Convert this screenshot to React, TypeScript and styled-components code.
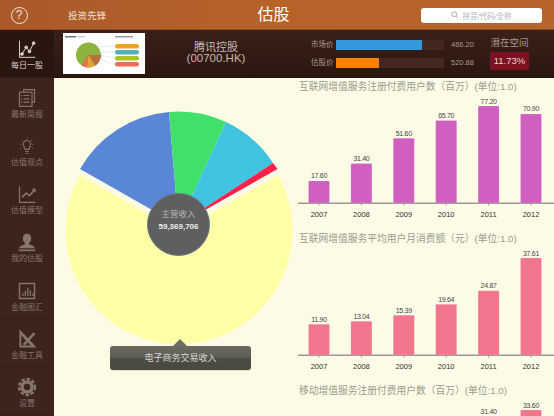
import React from "react";
import styled, { createGlobalStyle } from "styled-components";

const Global = createGlobalStyle`
  html, body { margin: 0; padding: 0; background: #fdfbe6; }
  body { font-family: "Liberation Sans", "Noto Sans CJK SC", sans-serif; }
`;
const CJK = `"Liberation Sans", "Noto Sans CJK SC", sans-serif`;

const Page = styled.div`
  width: 554px; height: 416px; overflow: hidden; display: flex; flex-direction: column;
`;
const TopBar = styled.header`
  height: 30px; flex: none; display: grid; grid-template-columns: 68px 1fr 133px; align-items: center; position: relative;
  background: linear-gradient(90deg, #a9592a 0%, #b6632a 45%, #b8652b 100%);
  box-shadow: inset 0 -1px 0 #8f4c24;
`;
const HelpButton = styled.div`
  display: flex; align-items: center; justify-content: center; padding-right: 30px;
`;
const HelpCircle = styled.div`
  width: 15px; height: 15px; border: 1px solid #f6e6d8; border-radius: 50%; color: #f6e6d8;
  font: 12px/15px ${CJK}; text-align: center;
`;
const Brand = styled.div`
  color: #efe0d2; font-size: 9.5px; letter-spacing: .1px;
`;
const Title = styled.div`
  position: absolute; left: 0; right: 7px; text-align: center; color: #fff; font-size: 16px; line-height: 30px; pointer-events: none;
`;
const Search = styled.div`
  width: 121px; height: 15px; background: #fff; border-radius: 3px; display: flex; align-items: center; justify-content: center; gap: 3px;
  color: #b5b5b5; font-size: 7.5px;
`;
const Main = styled.div`
  flex: 1; min-height: 0; display: grid; grid-template-columns: 54px 1fr;
`;
const Sidebar = styled.nav`
  background: #3d241c; display: flex; flex-direction: column;
`;
const NavItem = styled.div<{ $active?: boolean }>`
  height: 48.25px; flex: none; box-sizing: border-box; display: flex; flex-direction: column; align-items: center; justify-content: flex-end;
  padding-bottom: 6px; gap: 2px;
  background: ${p => (p.$active ? "#2a1610" : "transparent")};
  border-bottom: 1px solid #34201a;
  color: ${p => (p.$active ? "#d8cfc8" : "#85766d")};
  font-size: 8px; line-height: 10px;
  svg { display: block; }
`;
const Body = styled.div`
  display: flex; flex-direction: column; min-height: 0;
`;
const Header = styled.div`
  height: 48px; flex: none; box-sizing: border-box; display: flex; align-items: center;
  background: linear-gradient(180deg, #3a2018 0%, #2b1710 100%);
  padding-left: 9px;
  border-bottom: 1px solid #1f110c;
`;
const Thumb = styled.div`
  width: 82px; height: 41px; background: #fff; flex: none; svg { display: block; }
`;
const Company = styled.div`
  width: 142px; flex: none; text-align: center; color: #c4b8ae; font-size: 11px; line-height: 11px; margin-top: -2px;
`;
const Ticker = styled.div`
  font-size: 11.5px;
`;
const Prices = styled.div`
  width: 179px; flex: none; display: flex; flex-direction: column; gap: 8px; margin-left: 24px; margin-top: 1px;
`;
const PriceRow = styled.div`
  display: grid; grid-template-columns: 25px 108px 1fr; align-items: center; color: #a89a8f; font-size: 7.5px; line-height: 10px;
`;
const Track = styled.div`
  height: 10px; background: #44281f;
`;
const Fill = styled.div<{ $color: string }>`
  height: 100%; background: ${p => p.$color};
`;
const PriceValue = styled.span`
  padding-left: 7px; font-size: 7.5px;
`;
const Upside = styled.div`
  display: flex; flex-direction: column; align-items: center; gap: 3px; color: #a89a8f; font-size: 9.5px; line-height: 12px;
`;
const Badge = styled.div`
  width: 39px; height: 18px; background: #7c1122; border-radius: 1px; color: #e8d9d2; font-size: 9.5px; line-height: 18px; text-align: center;
`;
const Content = styled.div`
  flex: 1; min-height: 0; display: grid; grid-template-columns: 242px 258px; background: #fdfbe6; overflow: hidden;
`;
const PiePanel = styled.section`
  position: relative; svg { display: block; }
`;
const Hub = styled.div`
  position: absolute; left: 93px; top: 115px; width: 63px; height: 63px; box-sizing: border-box; border-radius: 50%;
  background: #5f5f5f; border: 1px solid #6b7c8c; display: flex; flex-direction: column; align-items: center; justify-content: center; gap: 1px;
  line-height: 11px; padding-bottom: 8px;
`;
const HubLabel = styled.div`
  color: #b9b9b9; font-size: 8.5px;
`;
const HubValue = styled.div`
  color: #eee; font-size: 8px; font-weight: 700;
`;
const Callout = styled.div`
  position: absolute; left: 56px; top: 268px; width: 141px; height: 24px; border-radius: 3px;
  background: linear-gradient(180deg, #6b6a61 0%, #5f5e56 45%, #4d4c43 55%, #4a4940 100%);
  color: #d6d6d0; font-size: 9px; line-height: 24px; text-align: center; box-shadow: 0 1px 1px rgba(0,0,0,.12);
  &::before {
    content: ""; position: absolute; left: 63px; top: -7px; border: 7px solid transparent; border-top: 0; border-bottom-color: #6e6d60;
  }
`;
const ChartColumn = styled.section`
  display: flex; flex-direction: column;
`;
const ChartBlock = styled.div`
  height: 152px; flex: none; svg { display: block; }
`;
const ChartTitle = styled.div`
  height: 18px; padding-left: 3px; color: #9b9b8e; font-size: 9.75px; line-height: 18px; white-space: nowrap;
`;

type Datum = [string, number];
type ChartProps = { title: string; color: string; max: number; data: Datum[]; cutOff?: boolean };
const Chart = ({ title, color, max, data, cutOff }: ChartProps) => {
  const base = 107;
  const h = 97;
  return (
    <ChartBlock>
      <ChartTitle>{title}</ChartTitle>
      <svg width="258" height="134" fontFamily={CJK}>
        {!cutOff && <rect x="2" y={base - 0.5} width="256" height="1.5" fill="#9a9a90" />}
        {data.map(([year, v], i) => {
          const cx = 23 + i * 42.4;
          const bh = (v / max) * h;
          const top = base - bh;
          if (cutOff && top > 0 && i < 4) return null;
          return (
            <g key={year}>
              <rect x={cx - 10.5} y={top} width="21" height={bh} rx="1" fill={color} stroke="rgba(255,255,255,.25)" strokeWidth=".5" />
              <text x={cx} y={top - 2.5} fontSize="7" letterSpacing="-.3" fill="#444" textAnchor="middle">{v.toFixed(2)}</text>
              {!cutOff && <rect x={cx - 0.5} y={base} width="1" height="2.5" fill="#9a9a90" />}
              {!cutOff && <text x={cx} y={base + 14} fontSize="7.5" fill="#333" textAnchor="middle">{year}</text>}
            </g>
          );
        })}
      </svg>
    </ChartBlock>
  );
};

const years = ["2007", "2008", "2009", "2010", "2011", "2012"];
const zip = (vals: number[]) => vals.map((v, i) => [years[i], v] as Datum);

const icon = { width: 20, height: 20, viewBox: "0 0 24 24", fill: "none", stroke: "currentColor" };
const ICONS = [
  <svg {...icon} strokeWidth="1.2"><path d="M3 2v20h19" /><path d="M6 18l5-8 4 5 5-10" /><circle cx="6" cy="18" r="1.6" fill="currentColor" /><circle cx="11" cy="10" r="1.6" fill="currentColor" /><circle cx="15" cy="15" r="1.6" fill="currentColor" /><circle cx="20" cy="5" r="1.6" fill="currentColor" /></svg>,
  <svg {...icon} strokeWidth="1.4"><path d="M8 5V2h13v15h-3" /><rect x="3" y="5" width="15" height="17" fill="#3d241c" /><path d="M8 9h7M8 13h7M8 17h7" /><path d="M5 9h1.5M5 13h1.5M5 17h1.5" /></svg>,
  <svg {...icon} strokeWidth="1.3"><path d="M8 12a4.5 4.5 0 1 1 8 0c-1 1.5-1.6 2.2-1.6 4h-4.8c0-1.8-.6-2.5-1.6-4z" /><path d="M10 18.5h4M10.500 21h3" /><path d="M12 2v2M4 10h2M18 10h2M6 4.500l1.300 1.300M18 4.500l-1.300 1.300M4.500 15l1.300-1M19.500 15l-1.300-1" strokeWidth="1" strokeDasharray="1.5 1" /></svg>,
  <svg {...icon} strokeWidth="1.5"><path d="M3 3v19h19" /><path d="M6 16l5-5 4 3 6-7" strokeWidth="2" /><path d="M18 6h4v4" fill="currentColor" strokeWidth="1" /></svg>,
  <svg {...icon} stroke="none" fill="currentColor"><path d="M12 2c3 0 5 2.3 5 5.5 0 2.4-1.100 4.300-2.300 5.500v2c3 .8 6.300 1.800 6.800 4.500H2.500c.5-2.700 3.800-3.700 6.800-4.500v-2C8.100 11.800 7 9.900 7 7.500 7 4.300 9 2 12 2z" /><rect x="2" y="21" width="20" height="2" /></svg>,
  <svg {...icon} strokeWidth="1.5"><rect x="3" y="3" width="18" height="18" strokeWidth="1.8" /><path d="M7 18v-4M10 18v-6M13 18V8M16 18v-7M19 18v-3" /></svg>,
  <svg {...icon} strokeWidth="2"><path d="M4 3v18h17z" strokeWidth="2.2" /><path d="M8 19L21 5" strokeWidth="3" /><path d="M5 6l13 14" strokeWidth="2.2" /></svg>,
  <svg {...icon} stroke="currentColor" strokeWidth="3" strokeDasharray="4 2.28"><circle cx="12" cy="12" r="9.500" /><circle cx="12" cy="12" r="6" strokeWidth="4" strokeDasharray="none" /></svg>,
];
const NAV = ["每日一股", "最新简报", "估值观点", "估值模型", "我的估股", "金融图汇", "金融工具", "设置"];

export default function App() {
  return (
    <Page>
      <Global />
      <TopBar>
        <HelpButton><HelpCircle>?</HelpCircle></HelpButton>
        <Brand>投资先锋</Brand>
        <Title>估股</Title>
        <Search>
          <svg width="8" height="8" viewBox="0 0 10 10" fill="none" stroke="#aaa" strokeWidth="1.2"><circle cx="4" cy="4" r="3" /><path d="M6.300 6.300L9 9" /></svg>
          拼音/代码/全称
        </Search>
      </TopBar>
      <Main>
        <Sidebar>
          {NAV.map((label, i) => (
            <NavItem key={label} $active={i === 0}>
              {ICONS[i]}
              {label}
            </NavItem>
          ))}
        </Sidebar>
        <Body>
          <Header>
            <Thumb>
              <svg width="82" height="41" viewBox="0 0 82 41">
                <rect x="2" y="3" width="11" height="1.5" fill="#777" />
                <rect x="14" y="3" width="8" height="1.5" fill="#ccc" />
                <rect x="52" y="3" width="18" height="1.5" fill="#999" />
                <circle cx="25.5" cy="22" r="12.5" fill="#8cb33c" />
                <path d="M25.500 22L38 22A12.500 12.500 0 0 1 32 32.700Z" fill="#b5703c" />
                <path d="M25.500 22L32 32.700A12.500 12.500 0 0 1 24 34.500Z" fill="#e0a63a" />
                <path d="M25.500 22L24 34.500A12.500 12.500 0 0 1 18.500 32.500Z" fill="#ee6a50" />
                <path d="M34 14L52 13M36 19L52 19M38 22L52 25M36 26L52 31" stroke="#cfdfe6" strokeWidth=".6" fill="none" />
                <rect x="52" y="11" width="24" height="4.5" rx="2.25" fill="#eaa51c" />
                <rect x="52" y="17" width="24" height="4.5" rx="2.25" fill="#55b0ba" />
                <rect x="52" y="23" width="24" height="4.5" rx="2.25" fill="#aec222" />
                <rect x="52" y="29" width="24" height="4.5" rx="2.25" fill="#ee6a5a" />
              </svg>
            </Thumb>
            <Company>
              腾讯控股
              <Ticker>(00700.HK)</Ticker>
            </Company>
            <Prices>
              <PriceRow>
                <span>市场价</span>
                <Track><Fill $color="#3498db" style={{ width: "80%" }} /></Track>
                <PriceValue>466.20</PriceValue>
              </PriceRow>
              <PriceRow>
                <span>估股价</span>
                <Track><Fill $color="#ff8000" style={{ width: "40%" }} /></Track>
                <PriceValue>520.88</PriceValue>
              </PriceRow>
            </Prices>
            <Upside>
              潜在空间
              <Badge>11.73%</Badge>
            </Upside>
          </Header>
          <Content>
            <PiePanel>
              <svg width="242" height="338" viewBox="0 0 242 338">
                <path d="M124.500 154L26 97A113.500 113.500 0 1 0 224 97Z" fill="#ffffa6" />
                <path d="M124.500 147L26 91A113.500 113.500 0 0 1 115 34Z" fill="#5a86d6" />
                <path d="M124.500 147L115 34A113.500 113.500 0 0 1 172 44Z" fill="#41e06d" />
                <path d="M124.500 147L172 44A113.500 113.500 0 0 1 219 85Z" fill="#3fc3e0" />
                <path d="M124.500 147L219 85L223.500 91Z" fill="#ff1f4b" />
              </svg>
              <Hub>
                <HubLabel>主营收入</HubLabel>
                <HubValue>59,369,706</HubValue>
              </Hub>
              <Callout>电子商务交易收入</Callout>
            </PiePanel>
            <ChartColumn>
              <Chart title="互联网增值服务注册付费用户数（百万）(单位:1.0)" color="#d060c0" max={77.2} data={zip([17.6, 31.4, 51.6, 65.7, 77.2, 70.9])} />
              <Chart title="互联网增值服务平均用户月消费额（元）(单位:1.0)" color="#f2758e" max={37.61} data={zip([11.9, 13.04, 15.39, 19.64, 24.87, 37.61])} />
              <Chart cutOff title="移动增值服务注册付费用户数（百万）(单位:1.0)" color="#f2758e" max={33.6} data={zip([6.2, 10.1, 15.8, 22.4, 31.4, 33.6])} />
            </ChartColumn>
          </Content>
        </Body>
      </Main>
    </Page>
  );
}
